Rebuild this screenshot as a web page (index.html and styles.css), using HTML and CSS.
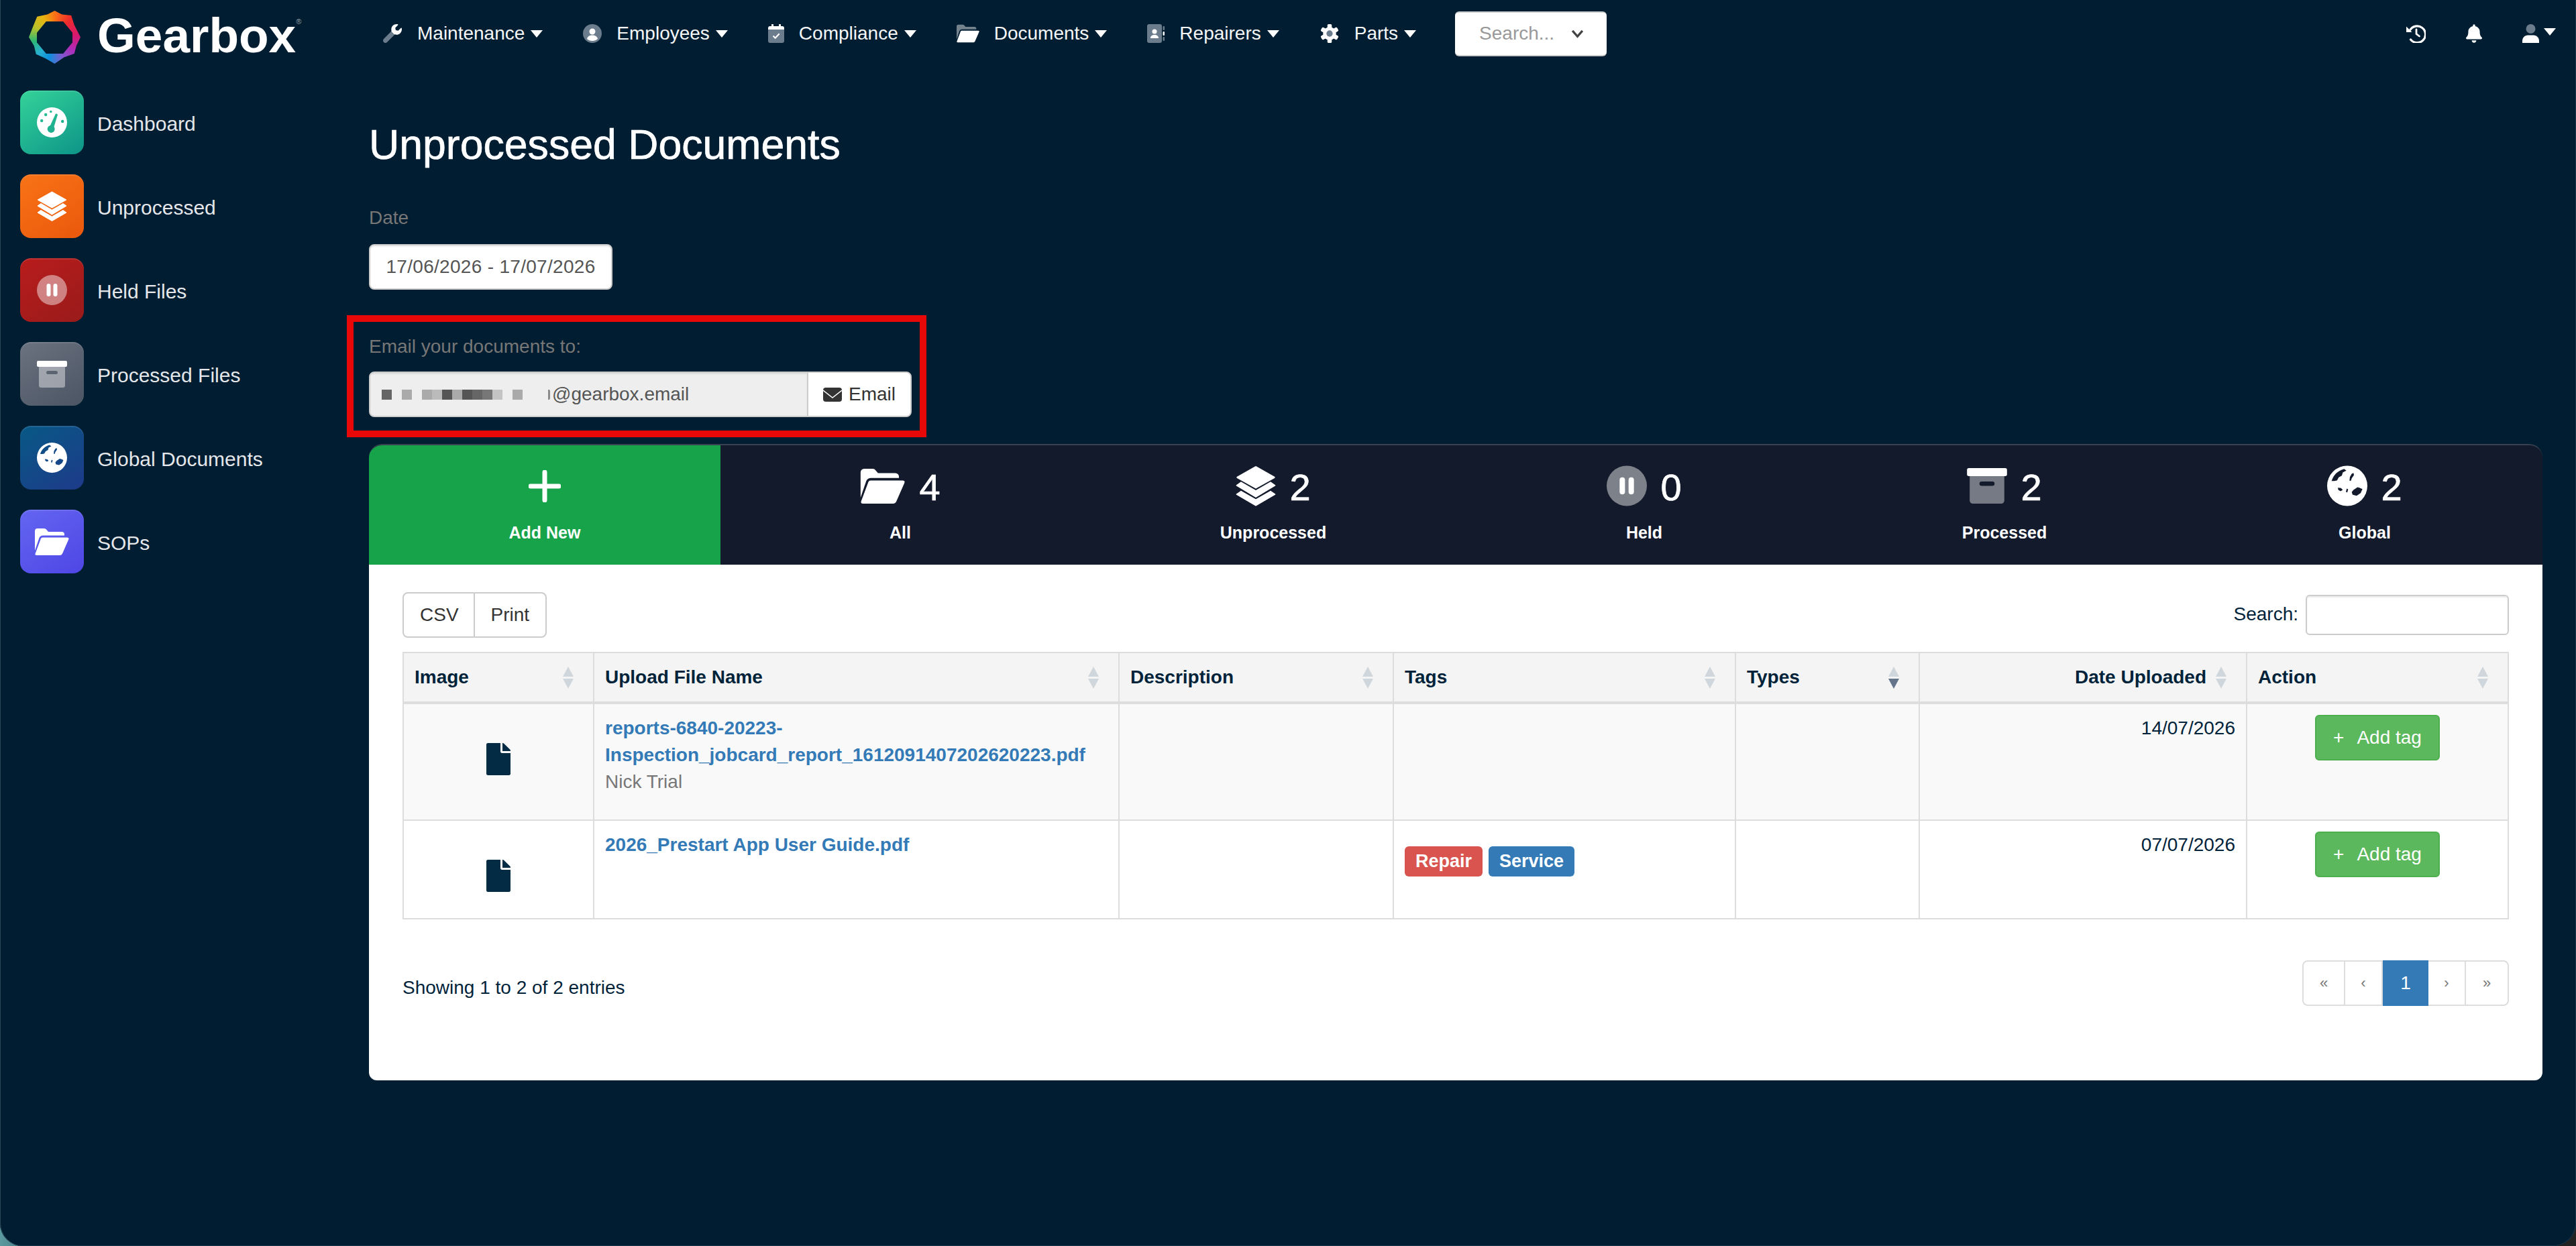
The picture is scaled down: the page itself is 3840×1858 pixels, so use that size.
FILE: index.html
```html
<!DOCTYPE html>
<html lang="en">
<head>
<meta charset="utf-8">
<title>Unprocessed Documents</title>
<link rel="stylesheet" href="styles.css">
</head>
<body>
<svg class="defs" width="0" height="0" aria-hidden="true">
  <defs>
    <linearGradient id="wrench-fill" x1="0" y1="1" x2="1" y2="0">
      <stop offset="0.52" stop-color="#6b7c8c"/><stop offset="0.52" stop-color="#fff"/>
    </linearGradient>
    <symbol id="i-wrench" viewBox="0 0 512 512">
      <path fill="url(#wrench-fill)" d="M507.73 109.1c-2.24-9.03-13.54-12.09-20.12-5.51l-74.36 74.36-67.88-11.31-11.31-67.88 74.36-74.36c6.62-6.62 3.43-17.9-5.66-20.16-47.38-11.74-99.55.91-136.58 37.93-39.64 39.64-50.55 97.1-34.05 147.2L18.74 402.76c-24.99 24.99-24.99 65.51 0 90.5 24.99 24.99 65.51 24.99 90.5 0l213.21-213.21c50.12 16.71 107.47 5.68 147.37-34.22 37.07-37.07 49.7-89.32 37.91-136.73z"/>
    </symbol>
    <symbol id="i-user-circle" viewBox="0 0 28 28">
      <circle cx="14" cy="14" r="14" fill="#6b7c8c"/>
      <circle cx="14" cy="11" r="4.500" fill="#fff"/>
      <path fill="#fff" d="M6 22c1-4 4-5.500 8-5.500s7 1.500 8 5.500c-2 2-5 3-8 3s-6-1-8-3z"/>
    </symbol>
    <symbol id="i-calendar" viewBox="0 0 24 28">
      <path fill="#6b7c8c" d="M0 8h24v17a3 3 0 0 1-3 3H3a3 3 0 0 1-3-3z"/>
      <path fill="#fff" d="M0 8V6a3 3 0 0 1 3-3h2V1a1.500 1.500 0 0 1 3 0v2h8V1a1.500 1.500 0 0 1 3 0v2h2a3 3 0 0 1 3 3v2z"/>
      <path fill="none" stroke="#fff" stroke-width="2.200" d="M7.500 17.500l3.200 3.200 6-6.500"/>
    </symbol>
    <symbol id="i-folder" viewBox="0 0 51 40">
      <path style="fill-opacity:var(--back,1)" fill="currentColor" d="M0 33V4a4 4 0 0 1 4-4h10q2 0 3 1.500L20 5h20a4 4 0 0 1 4 4v1.500H12q-4 0-5.500 3.500z"/>
      <path fill="currentColor" d="M11.500 13.500H48q3.500 0 2.200 3L41 37.500q-1.200 2.500-4 2.500H3q-3.500 0-2.200-3L9 15q.7-1.500 2.500-1.500z"/>
    </symbol>
    <symbol id="i-book" viewBox="0 0 26 28">
      <rect width="22" height="28" rx="3" fill="#6b7c8c"/>
      <rect x="23.500" y="3" width="2.500" height="6" rx="1" fill="#6b7c8c"/>
      <rect x="23.500" y="11" width="2.500" height="6" rx="1" fill="#fff"/>
      <rect x="23.500" y="19" width="2.500" height="6" rx="1" fill="#6b7c8c"/>
      <circle cx="11" cy="11" r="3.500" fill="#fff"/>
      <path fill="#fff" d="M5 21c0-3.500 2.500-5 6-5s6 1.500 6 5z"/>
    </symbol>
    <symbol id="i-gear" viewBox="0 0 30 30">
      <g fill="#fff">
        <circle cx="15" cy="15" r="10.500"/>
        <rect x="11.500" y="0" width="7" height="30" rx="2"/>
        <rect x="11.500" y="0" width="7" height="30" rx="2" transform="rotate(60 15 15)"/>
        <rect x="11.500" y="0" width="7" height="30" rx="2" transform="rotate(120 15 15)"/>
      </g>
      <circle cx="15" cy="15" r="5" fill="#6b7c8c"/>
    </symbol>
    <symbol id="i-history" viewBox="0 0 29 28">
      <path fill="none" stroke="#fff" stroke-width="3.200" stroke-linecap="round" d="M5.500 9A12.400 12.400 0 1 1 6.500 23"/>
      <path fill="#fff" d="M0 3.500l8.500 8.500H0z"/>
      <path fill="none" stroke="#fff" stroke-width="2.800" stroke-linecap="round" d="M15 8v6.500l4.500 3.500"/>
    </symbol>
    <symbol id="i-bell" viewBox="0 0 448 512">
      <path fill="#fff" d="M224 512c35.32 0 63.97-28.65 63.97-64H160.030c0 35.350 28.650 64 63.970 64zm215.390-149.710c-19.320-20.760-55.470-51.990-55.470-154.290 0-77.700-54.480-139.900-127.940-155.160V32c0-17.670-14.320-32-31.980-32s-31.980 14.330-31.980 32v20.840C118.560 68.100 64.080 130.300 64.080 208c0 102.300-36.150 133.530-55.470 154.290-6 6.45-8.66 14.160-8.61 21.710.11 16.400 12.980 32 32.100 32h383.800c19.120 0 32-15.600 32.100-32 .05-7.550-2.610-15.270-8.610-21.710z"/>
    </symbol>
    <symbol id="i-user" viewBox="0 0 25 28">
      <circle cx="12.500" cy="7" r="7" fill="#6b7c8c"/>
      <path fill="#fff" d="M0 28v-3c0-5 4-8.500 8-8.500h9c4 0 8 3.500 8 8.500v3z"/>
    </symbol>
    <symbol id="i-gauge" viewBox="0 0 45 45">
      <path fill="#fff" fill-rule="evenodd" d="M22.500 0a22.500 22.500 0 1 0 0 45a22.500 22.500 0 1 0 0-45zM11 11a2.200 2.200 0 1 0 4.400 0a2.200 2.200 0 1 0-4.400 0zM5 20a2.200 2.200 0 1 0 4.400 0a2.200 2.200 0 1 0-4.400 0zM19 6.500a1.800 1.800 0 1 0 3.600 0a1.800 1.800 0 1 0-3.600 0zM36 21a2.200 2.200 0 1 0 4.400 0a2.200 2.200 0 1 0-4.400 0zM28 9.500q2.500-.5 3 1.500L25.500 29a5.500 5.500 0 1 1-5.500-2z"/>
    </symbol>
    <symbol id="i-layers" viewBox="0 0 45 45">
      <path fill="currentColor" stroke="currentColor" stroke-width="2" stroke-linejoin="round" d="M22.500 1.500L43 13 22.500 24.500 2 13z"/>
      <path fill="currentColor" stroke="currentColor" stroke-width="1" stroke-linejoin="round" d="M6 18.500l16.500 9.500L39 18.500l5 3.500-21.500 13L1 22z"/>
      <path fill="currentColor" stroke="currentColor" stroke-width="1" stroke-linejoin="round" d="M6 28.500l16.500 9.500L39 28.500l5 3.500-21.500 12.500L1 32z"/>
    </symbol>
    <symbol id="i-pause" viewBox="0 0 45 45">
      <circle cx="22.500" cy="22.500" r="22.500" fill="#fff" fill-opacity="0.45"/>
      <rect x="14.500" y="13" width="6" height="19" rx="3" fill="#fff"/>
      <rect x="24.500" y="13" width="6" height="19" rx="3" fill="#fff"/>
    </symbol>
    <symbol id="i-box" viewBox="0 0 45 40">
      <rect width="45" height="9" rx="2" fill="#fff"/>
      <path fill="#fff" fill-opacity="0.42" fill-rule="evenodd" d="M3 9h39v27.500a3.500 3.500 0 0 1-3.500 3.500h-32A3.500 3.500 0 0 1 3 36.500zM16.500 15a2.500 2.500 0 0 0 0 5h12a2.500 2.500 0 0 0 0-5z"/>
    </symbol>
    <symbol id="i-globe" viewBox="0 0 45 45">
      <path fill="#fff" fill-rule="evenodd" d="M22.500 0a22.500 22.500 0 1 0 0 45a22.500 22.500 0 1 0 0-45zM5 17C7 10 12 5.500 19 3.500l2.500 2-4 2-1 3.500-3.500 2-2 3.500-3 .5zM27.500 9l2-1 .5 2.500-2.500 3.500-1 3-1.500-.5.500-4zM12 24.500l3.500.5 2 2-2.500 1.500-2.500-1.500zM22 25.500l1.500 1-1 3.500-1.500-1zM29.500 27l4.500-3 2 .5 3.500 1.500-2 4.500-4.500 3-4.500-1-1-3z"/>
    </symbol>
    <symbol id="i-file" viewBox="0 0 384 512">
      <path fill="#032b44" d="M224 136V0H24C10.700 0 0 10.700 0 24v464c0 13.300 10.700 24 24 24h336c13.300 0 24-10.700 24-24V160H248c-13.200 0-24-10.800-24-24zm160-14.100v6.100H256V0h6.100c6.400 0 12.500 2.500 17 7l97.900 98c4.500 4.500 7 10.600 7 16.900z"/>
    </symbol>
    <symbol id="i-sort" viewBox="0 0 16 33">
      <path fill="#d0d7dc" d="M8 0l8 15H0z"/>
      <path style="fill:var(--sort-down,#d0d7dc)" d="M0 18h16L8 33z"/>
    </symbol>
  </defs>
</svg>

<div class="app">
  <header class="topbar">
    <div class="brand">
      <div class="mark"></div>
      <span class="wordmark">Gearbox<sup class="reg">®</sup></span>
    </div>
    <nav class="menu">
      <a class="menu-item"><svg class="ni w30"><use href="#i-wrench"/></svg><span>Maintenance</span><i class="caret"></i></a>
      <a class="menu-item"><svg class="ni w28"><use href="#i-user-circle"/></svg><span>Employees</span><i class="caret"></i></a>
      <a class="menu-item"><svg class="ni w24"><use href="#i-calendar"/></svg><span>Compliance</span><i class="caret"></i></a>
      <a class="menu-item duo"><svg class="ni w34"><use href="#i-folder"/></svg><span>Documents</span><i class="caret"></i></a>
      <a class="menu-item"><svg class="ni w26"><use href="#i-book"/></svg><span>Repairers</span><i class="caret"></i></a>
      <a class="menu-item"><svg class="ni w30"><use href="#i-gear"/></svg><span>Parts</span><i class="caret"></i></a>
      <div class="top-search"><span>Search...</span><svg class="chev" viewBox="0 0 20 14"><path d="M2 2l8 9 8-9" fill="none" stroke="#444" stroke-width="3.500"/></svg></div>
    </nav>
    <div class="tools">
      <svg class="ni w29"><use href="#i-history"/></svg>
      <svg class="ni w24"><use href="#i-bell"/></svg>
      <div class="user"><svg class="ni w25"><use href="#i-user"/></svg><i class="caret"></i></div>
    </div>
  </header>

  <div class="layout">
    <aside class="side">
      <a class="side-item"><span class="tile t-green"><svg class="si"><use href="#i-gauge"/></svg></span><span class="side-text">Dashboard</span></a>
      <a class="side-item"><span class="tile t-orange"><svg class="si"><use href="#i-layers"/></svg></span><span class="side-text">Unprocessed</span></a>
      <a class="side-item"><span class="tile t-red"><svg class="si"><use href="#i-pause"/></svg></span><span class="side-text">Held Files</span></a>
      <a class="side-item"><span class="tile t-gray"><svg class="si si-box"><use href="#i-box"/></svg></span><span class="side-text">Processed Files</span></a>
      <a class="side-item"><span class="tile t-blue"><svg class="si"><use href="#i-globe"/></svg></span><span class="side-text">Global Documents</span></a>
      <a class="side-item"><span class="tile t-violet"><svg class="si si-folder"><use href="#i-folder"/></svg></span><span class="side-text">SOPs</span></a>
    </aside>

    <main class="main">
      <h1 class="title">Unprocessed Documents</h1>
      <div class="field-label">Date</div>
      <div class="date-input">17/06/2026 - 17/07/2026</div>

      <section class="email-block">
        <div class="highlight"></div>
        <div class="field-label email-label">Email your documents to:</div>
        <div class="email-group">
          <div class="email-addr">
            <span class="mosaic">
              <i class="m5"></i><i class="m0"></i><i class="m2"></i><i class="m0"></i><i class="m2"></i><i class="m1"></i><i class="m6"></i><i class="m2"></i><i class="m6"></i><i class="m5"></i><i class="m4"></i><i class="m1b"></i><i class="m0"></i><i class="m2"></i>
            </span>
            <i class="sliver"></i>
            <span class="addr-text">@gearbox.email</span>
          </div>
          <div class="email-btn">
            <svg class="env" viewBox="0 0 28 21"><rect width="28" height="21" rx="4" fill="#333"/><path d="M0 4l14 11L28 4" fill="none" stroke="#fff" stroke-width="1.500"/></svg>
            <span>Email</span>
          </div>
        </div>
      </section>

      <section class="card">
        <div class="tabs">
          <a class="tab tab-add">
            <div class="tab-head"><svg class="plus" viewBox="0 0 48 48"><path d="M24 3v42M3 24h42" stroke="#fff" stroke-width="7" stroke-linecap="round"/></svg></div>
            <div class="tab-label">Add New</div>
          </a>
          <a class="tab"><div class="tab-head"><svg class="ti ti-folder"><use href="#i-folder"/></svg><b>4</b></div><div class="tab-label">All</div></a>
          <a class="tab"><div class="tab-head"><svg class="ti"><use href="#i-layers"/></svg><b>2</b></div><div class="tab-label">Unprocessed</div></a>
          <a class="tab"><div class="tab-head"><svg class="ti"><use href="#i-pause"/></svg><b>0</b></div><div class="tab-label">Held</div></a>
          <a class="tab"><div class="tab-head"><svg class="ti ti-box"><use href="#i-box"/></svg><b>2</b></div><div class="tab-label">Processed</div></a>
          <a class="tab"><div class="tab-head"><svg class="ti"><use href="#i-globe"/></svg><b>2</b></div><div class="tab-label">Global</div></a>
        </div>

        <div class="panel">
          <div class="toolbar">
            <div class="btn-group"><span class="tool-btn">CSV</span><span class="tool-btn">Print</span></div>
            <label class="search"><span>Search:</span><span class="search-box"></span></label>
          </div>

          <table class="grid">
            <colgroup>
              <col class="c1"><col class="c2"><col class="c3"><col class="c4"><col class="c5"><col class="c6"><col class="c7">
            </colgroup>
            <thead>
              <tr>
                <th>Image<svg class="sort"><use href="#i-sort"/></svg></th>
                <th>Upload File Name<svg class="sort"><use href="#i-sort"/></svg></th>
                <th>Description<svg class="sort"><use href="#i-sort"/></svg></th>
                <th>Tags<svg class="sort"><use href="#i-sort"/></svg></th>
                <th class="sorted">Types<svg class="sort"><use href="#i-sort"/></svg></th>
                <th class="th-date">Date Uploaded<svg class="sort"><use href="#i-sort"/></svg></th>
                <th>Action<svg class="sort"><use href="#i-sort"/></svg></th>
              </tr>
            </thead>
            <tbody>
              <tr class="row-a">
                <td class="cell-icon"><svg class="file"><use href="#i-file"/></svg></td>
                <td><a class="file-link">reports-6840-20223-<br>Inspection_jobcard_report_1612091407202620223.pdf</a><div class="owner">Nick Trial</div></td>
                <td></td>
                <td></td>
                <td></td>
                <td class="cell-date">14/07/2026</td>
                <td class="cell-action"><a class="add-tag"><span class="add-plus">+</span>Add tag</a></td>
              </tr>
              <tr class="row-b">
                <td class="cell-icon"><svg class="file"><use href="#i-file"/></svg></td>
                <td><a class="file-link">2026_Prestart App User Guide.pdf</a></td>
                <td></td>
                <td><span class="badge b-red">Repair</span><span class="badge b-blue">Service</span></td>
                <td></td>
                <td class="cell-date">07/07/2026</td>
                <td class="cell-action"><a class="add-tag"><span class="add-plus">+</span>Add tag</a></td>
              </tr>
            </tbody>
          </table>

          <div class="table-foot">
            <div class="info">Showing 1 to 2 of 2 entries</div>
            <div class="pager">
              <a class="pg pg-edge">«</a><a class="pg pg-step">‹</a><a class="pg pg-on">1</a><a class="pg pg-step">›</a><a class="pg pg-edge">»</a>
            </div>
          </div>
        </div>
      </section>
    </main>
  </div>
</div>
</body>
</html>
```

FILE: styles.css
```css
* { box-sizing: border-box; }
html {
  height: 100%;
  background: linear-gradient(90deg, #5b9aa0 0, #3b6a70 60px, #222 3700px);
}
body {
  margin: 0;
  height: 100%;
  overflow: hidden;
  font-family: "Liberation Sans", Arial, sans-serif;
  font-size: 28px;
  color: #00233a;
}
a { color: inherit; text-decoration: none; }
.defs { position: absolute; }

.app {
  height: 1858px;
  background: #001d31;
  border-radius: 0 0 34px 34px;
  box-shadow: inset 1px 0 0 #2c4656, inset -1px 0 0 #16344a, inset 0 -1px 0 #16344a;
  overflow: hidden;
}

/* top bar */
.topbar {
  height: 100px;
  display: flex;
  align-items: center;
  padding: 0 30px 0 43px;
  color: #f5f6f7;
}
.brand {
  width: 527px;
  display: flex;
  align-items: center;
  gap: 25px;
}
.mark {
  width: 77px;
  height: 79px;
  margin-top: 11px;
  position: relative;
  background: conic-gradient(#f97316 0deg, #ef2b2b 40deg, #d6186f 85deg, #b02cb8 125deg, #7c5ad0 160deg, #0e8fdc 195deg, #27b0d0 225deg, #2eb872 260deg, #b7c22c 295deg, #e9b411 330deg, #f97316 360deg);
  clip-path: polygon(50% 0, 64% 7%, 82% 9%, 88% 27%, 100% 50%, 92% 66%, 88% 81%, 68% 88%, 50% 100%, 32% 90%, 14% 82%, 10% 66%, 0 50%, 8% 30%, 16% 11%, 36% 7%);
}
.mark::after {
  content: "";
  position: absolute;
  left: 12px;
  top: 16px;
  width: 53px;
  height: 48px;
  background: #001d31;
  clip-path: polygon(26% 0, 74% 0, 100% 35%, 100% 65%, 74% 100%, 26% 100%, 0 65%, 0 35%);
}
.wordmark {
  font-size: 73px;
  font-weight: 700;
  line-height: 80px;
  color: #fff;
  margin-top: 6px;
  white-space: nowrap;
}
.reg {
  font-size: 11px;
  font-weight: 400;
  line-height: 0;
  vertical-align: 42px;
  color: #9aa5ad;
}
.menu {
  display: flex;
  align-items: center;
  gap: 60px;
}
.menu-item {
  display: flex;
  align-items: center;
  gap: 22px;
  --back: 0.45;
}
.menu-item .caret { margin-left: -13px; }
.ni { height: 28px; display: block; flex: none; color: #fff; }
.w24 { width: 24px; }
.w25 { width: 25px; }
.w26 { width: 26px; }
.w28 { width: 28px; }
.w29 { width: 29px; }
.w30 { width: 30px; }
.w34 { width: 34px; }
.caret {
  display: block;
  width: 0;
  height: 0;
  border-left: 9px solid transparent;
  border-right: 9px solid transparent;
  border-top: 11px solid #fff;
}
.top-search {
  width: 226px;
  height: 67px;
  margin-left: -2px;
  padding: 0 34px 0 36px;
  background: #fff;
  border-radius: 6px;
  border-top: 2px solid #ccc;
  border-bottom: 2px solid #ccc;
  display: flex;
  align-items: center;
  justify-content: space-between;
  color: #999;
}
.chev { width: 19px; height: 13px; }
.tools {
  margin-left: auto;
  display: flex;
  align-items: center;
  gap: 60px;
}
.user { display: flex; gap: 7px; align-items: center; }
.user .caret { margin-top: -6px; }

/* body */
.layout { display: flex; }
.side {
  width: 550px;
  padding: 35px 0 0 30px;
  display: flex;
  flex-direction: column;
  gap: 30px;
  flex: none;
}
.side-item {
  display: flex;
  align-items: center;
  gap: 20px;
  font-size: 30px;
  color: #e5e7eb;
}
.side-text { margin-top: 4px; }
.tile {
  width: 95px;
  height: 95px;
  border-radius: 16px;
  display: flex;
  align-items: center;
  justify-content: center;
  color: #fff;
  box-shadow: inset 0 2px 0 rgba(255, 255, 255, .1);
}
.t-green { background: linear-gradient(145deg, #34d399, #0d9488); }
.t-orange { background: linear-gradient(145deg, #f97316, #ea580c); }
.t-red { background: linear-gradient(145deg, #b91c1c, #991b1b); }
.t-gray { background: linear-gradient(145deg, #6b7280, #4b5563); }
.t-blue { background: linear-gradient(145deg, #075985, #1e3a8a); }
.t-violet { background: linear-gradient(145deg, #6366f1, #4f46e5); }
.si { width: 45px; height: 45px; display: block; }
.si-box { height: 40px; }
.si-folder { width: 51px; height: 40px; }

.main { flex: 1; padding-right: 50px; }
.title {
  margin: 82px 0 55px;
  font-size: 62.600px;
  line-height: 66px;
  font-weight: 400;
  color: #fff;
  -webkit-text-stroke: .7px #fff;
}
.field-label {
  height: 40px;
  padding-top: 2px;
  line-height: 40px;
  color: #777;
  margin-bottom: 21px;
}
.date-input {
  width: 363px;
  height: 68px;
  line-height: 64px;
  text-align: center;
  letter-spacing: .3px;
  color: #555;
  background: #fff;
  border: 2px solid #ccc;
  border-radius: 8px;
  box-shadow: inset 0 2px 2px rgba(0, 0, 0, .075);
}
.email-block {
  position: relative;
  margin: 63px 0 40px;
}
.email-label { margin-bottom: 19px; }
.highlight {
  position: absolute;
  left: -33px;
  top: -25px;
  width: 864px;
  height: 182px;
  border: 10px solid #e80808;
}
.email-group {
  width: 809px;
  height: 68px;
  display: flex;
  background: #eee;
  border: 2px solid #ccc;
  border-radius: 8px;
  overflow: hidden;
  color: #555;
}
.email-addr {
  flex: 1;
  display: flex;
  align-items: center;
  padding-left: 17px;
  box-shadow: inset 0 2px 2px rgba(0, 0, 0, .075);
}
.mosaic { display: flex; width: 225px; height: 15px; margin-right: 23px; }
.mosaic i { width: 15px; height: 15px; display: block; }
.m0 { background: transparent; }
.m1 { background: #bbb; }
.m1b { background: #c4c4c4; }
.m2 { background: #aaa; }
.m4 { background: #777; }
.m5 { background: #666; }
.m6 { background: #555; }
.sliver {
  display: block;
  width: 3px;
  height: 15px;
  margin-right: 3px;
  background: #8a8a8a;
  border-radius: 0 2px 2px 0;
}
.email-btn {
  width: 154px;
  flex: none;
  background: #fff;
  border-left: 2px solid #ccc;
  color: #333;
  display: flex;
  align-items: center;
  justify-content: center;
  gap: 10px;
}
.env { width: 28px; height: 21px; }

.card { width: 3240px; }
.tabs {
  height: 180px;
  display: grid;
  grid-template-columns: 524px 536px 576px 530px 544px 530px;
  background: #131a2b;
  border-top: 2px solid #374151;
  border-radius: 20px 20px 0 0;
  overflow: hidden;
  color: #fff;
}
.tab {
  display: flex;
  flex-direction: column;
  align-items: center;
  padding-top: 30px;
}
.tab-add { background: #16a34a; margin-top: -2px; padding-top: 32px; }
.tab-head {
  height: 61px;
  display: flex;
  align-items: center;
  gap: 20px;
}
.tab-head b {
  font-size: 56px;
  line-height: 61px;
  font-weight: 400;
  margin-top: 3px;
  -webkit-text-stroke: .7px #fff;
}
.tab-label {
  margin-top: 24px;
  font-size: 25px;
  line-height: 30px;
  font-weight: 700;
}
.plus { width: 48px; height: 48px; }
.ti { width: 60px; height: 61px; display: block; }
.ti-folder { width: 68px; height: 52px; }
.ti-box { height: 53px; }

.panel {
  background: #fff;
  padding: 41px 50px 0;
  height: 769px;
  border-radius: 0 0 12px 12px;
}
.toolbar {
  height: 68px;
  display: flex;
  justify-content: space-between;
  align-items: center;
  margin-bottom: 21px;
}
.btn-group {
  display: flex;
  height: 68px;
  border: 2px solid #ccc;
  border-radius: 8px;
  color: #333;
}
.tool-btn {
  padding: 0 24px;
  line-height: 64px;
}
.tool-btn:first-child { padding-right: 22px; }
.tool-btn + .tool-btn { border-left: 2px solid #ccc; }
.search { display: flex; align-items: center; gap: 11px; }
.search > span:first-child { margin-top: -3px; }
.search-box {
  width: 303px;
  height: 60px;
  border: 2px solid #ccc;
  border-radius: 6px;
  box-shadow: inset 0 2px 2px rgba(0, 0, 0, .075);
}

.grid {
  width: 3140px;
  table-layout: fixed;
  border-collapse: separate;
  border-spacing: 0;
  border-top: 2px solid #ddd;
  border-left: 2px solid #ddd;
}
.c1 { width: 284px; }
.c2 { width: 783px; }
.c3 { width: 409px; }
.c4 { width: 510px; }
.c5 { width: 274px; }
.c6 { width: 488px; }
.c7 { width: 390px; }
.grid th {
  height: 76px;
  position: relative;
  padding: 0 16px;
  text-align: left;
  font-weight: 700;
  background: #f4f4f4;
  border-right: 2px solid #ddd;
  border-bottom: 4px solid #ddd;
}
.grid th.th-date { text-align: right; padding-right: 59px; }
.sort {
  position: absolute;
  right: 29px;
  top: 20px;
  width: 16px;
  height: 33px;
}
.sorted { --sort-down: #64748b; }
.grid td {
  padding: 16px;
  vertical-align: top;
  line-height: 40px;
  border-right: 2px solid #ddd;
  border-bottom: 2px solid #ddd;
}
.row-a td { height: 174px; background: #f9f9f9; }
.row-b td { height: 147px; background: #fff; }
.grid td.cell-icon { text-align: center; }
.file { display: block; width: 36px; height: 48px; margin: 42px auto 0; }
.file-link { color: #337ab7; font-weight: 700; }
.owner { color: #777; }
.grid td.cell-date { text-align: right; }
.grid td.cell-action { padding-left: 0; padding-right: 0; }
.add-tag {
  width: 186px;
  height: 68px;
  margin: 0 auto;
  display: flex;
  align-items: center;
  justify-content: center;
  background: #5cb85c;
  border: 2px solid #4cae4c;
  border-radius: 6px;
  color: #fff;
}
.add-plus { margin-right: 19px; }
.badge {
  display: inline-block;
  height: 45px;
  margin: 22px 9px 0 0;
  padding: 0 16px;
  border-radius: 6px;
  color: #fff;
  font-size: 27px;
  line-height: 44px;
  font-weight: 700;
  vertical-align: top;
}
.b-red { background: #d9534f; }
.b-blue { background: #337ab7; }

.table-foot {
  margin-top: 61px;
  height: 68px;
  display: flex;
  justify-content: space-between;
  align-items: center;
}
.info { padding-top: 14px; }
.pager {
  display: flex;
  height: 68px;
  border: 2px solid #ddd;
  border-radius: 8px;
  color: #777;
  font-size: 22px;
}
.pg {
  display: flex;
  align-items: center;
  justify-content: center;
  border-right: 2px solid #ddd;
}
.pg:last-child { border-right: 0; }
.pg-edge { width: 62px; }
.pg-step { width: 56px; }
.pg-on {
  width: 68px;
  margin: -2px 0;
  background: #337ab7;
  border-right: 0;
  color: #fff;
  font-size: 28px;
}
```
